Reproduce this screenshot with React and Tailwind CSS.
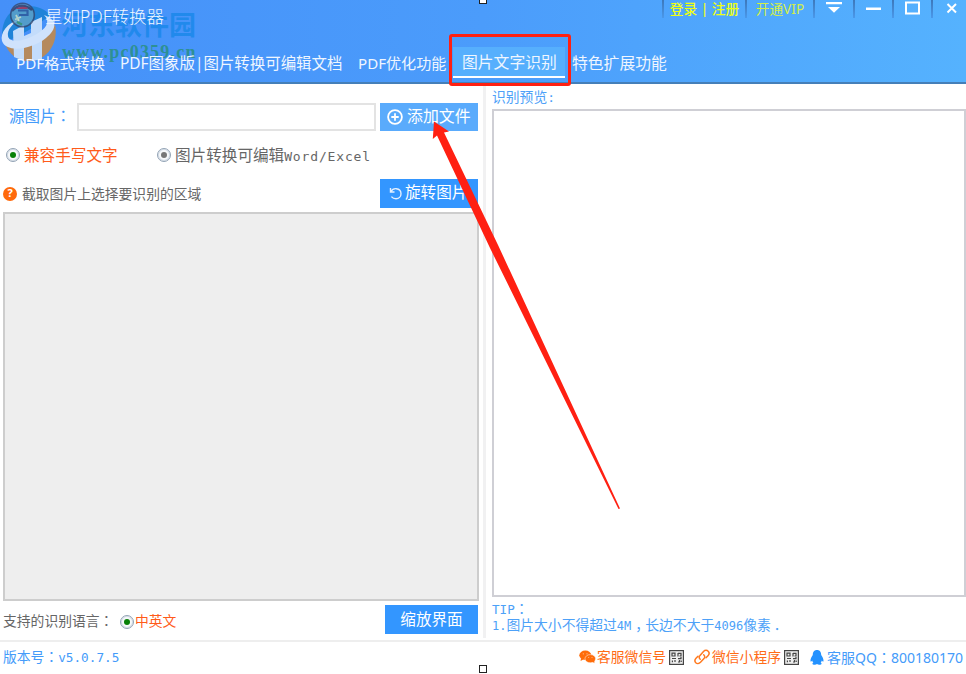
import clsx from 'clsx';

const tabs = [
  { label: 'PDF格式转换', box: 'w-[104px]', text: 'text-[15.2px]' },
  { label: 'PDF图象版|图片转换可编辑文档', box: 'w-[238px]', text: 'text-[15.45px]' },
  { label: 'PDF优化功能', box: 'w-[95px]', text: 'text-[15.1px]' },
  { label: '图片文字识别', box: 'w-[119px]', text: 'text-[15.8px]', active: true },
  { label: '特色扩展功能', box: 'w-[110px]', text: 'text-[15.8px]' },
];

const Mono = ({ className, children }) => (
  <span className={clsx("font-['DejaVu_Sans_Mono',monospace]", className)}>{children}</span>
);

// The TC face centres the full-width colon in its cell
const Colon = () => <span className="font-['Noto_Sans_CJK_TC',sans-serif] leading-none">：</span>;

const Radio = ({ checked }) => (
  <span className="flex h-[14px] w-[14px] shrink-0 items-center justify-center rounded-full border border-[#93a3b5] bg-[#f6f8fa] shadow-[inset_0_0_0_1px_#d5dde6]">
    <span className={clsx('h-[6px] w-[6px] rounded-full', checked ? 'bg-[#078007]' : 'bg-[#777]')} />
  </span>
);

const Separator = () => (
  <span className="h-[18px] w-[2px] shrink-0 bg-linear-to-b from-[#3d78ba] to-[#4a98ea]" />
);

const AppLogo = () => (
  <svg className="h-[27px] w-[27px] opacity-80" viewBox="0 0 27 27">
    <circle cx="13.5" cy="13" r="11.8" fill="#5fa3c9" stroke="#35486f" strokeWidth="1.6" />
    <path d="M3 9 Q12 -1 23 8" fill="none" stroke="#3a3f62" strokeWidth="2.4" />
    <path d="M7 6.5 Q12 3.5 18.5 5.5 V7 H7Z" fill="#b0304f" />
    <path d="M9 8.5 H18.5 V13 H10" fill="none" stroke="#35589b" strokeWidth="2.2" />
    <path d="M7 13 L10 19 M6 17.5 L12 15" stroke="#d8e6c8" strokeWidth="1.8" />
    <path d="M8 20 L13 22.5" stroke="#3f9a6a" strokeWidth="2" />
  </svg>
);

const QrIcon = () => (
  <svg className="h-[15px] w-[15px]" viewBox="0 0 15 15" fill="none" stroke="#444" strokeWidth="1.2">
    <rect x="0.6" y="0.6" width="13.8" height="13.8" fill="#eee" />
    <path d="M3 3.2H6V6H3ZM9 3V6.5M9 3.4H12V6H10.5M3 8.5H7M3.4 10.5V12.2M6 10V12M9 8.6H12V7M9 12H10.5V10M12.2 10.5V12" />
  </svg>
);

const WechatIcon = () => (
  <svg className="h-[14px] w-[17px]" viewBox="0 0 17 14">
    <ellipse cx="6.3" cy="5.2" rx="6" ry="4.7" fill="#ff6c0a" />
    <path d="M2 8 L1.6 11 L5 9Z" fill="#ff6c0a" />
    <ellipse cx="11.3" cy="8.7" rx="5.3" ry="4.1" fill="#ff6c0a" stroke="#fff" strokeWidth="0.5" />
    <path d="M13 11 L15.3 13.3 L15.3 10Z" fill="#ff6c0a" />
    <g fill="#ffc79e">
      <circle cx="4.3" cy="3.8" r="0.6" />
      <circle cx="8" cy="3.8" r="0.6" />
      <circle cx="9.7" cy="7.6" r="0.5" />
      <circle cx="13" cy="7.6" r="0.5" />
    </g>
  </svg>
);

const LinkIcon = () => (
  <svg className="h-[16px] w-[16px]" viewBox="0 0 16 16" fill="none" stroke="#ff7a20" strokeWidth="1.5" strokeLinecap="round">
    <path d="M6.2 10.2 C4.8 8.8 5 7.5 6 6.5 L9.5 2.5 C11 1 13 1 14.2 2.3 C15.5 3.6 15.3 5.3 14 6.7 L12 8.8" />
    <path d="M9.7 5.8 C11.1 7.2 11 8.5 10 9.5 L6.5 13.3 C5 14.8 3 14.9 1.8 13.7 C.6 12.4.7 10.7 2 9.3 L4 7.2" />
  </svg>
);

const QqIcon = () => (
  <svg className="h-[15px] w-[14px]" viewBox="0 0 14 15" fill="#2492ff">
    <path d="M7 0 C4 0 2.8 2.2 2.8 5 C1.5 7 .2 9 .5 11.5 C1.2 11.8 1.7 11 2.2 10.4 C2.5 11.7 3 12.1 3.4 12.5 C2 13 2 14.8 4 14.8 C5.5 14.8 6.5 14.4 7 14 C7.5 14.4 8.5 14.8 10 14.8 C12 14.8 12 13 10.6 12.5 C11 12.1 11.5 11.7 11.8 10.4 C12.3 11 12.8 11.8 13.5 11.5 C13.8 9 12.5 7 11.2 5 C11.2 2.2 10 0 7 0Z" />
  </svg>
);

const Watermark = () => (
  <div className="pointer-events-none absolute top-0 left-0 h-[68px] w-[200px]">
    <svg className="absolute top-0 left-0 h-[66px] w-[60px]" viewBox="0 0 60 66">
      <path d="M2 35 C2 17 13 6 28 6 C37 6 45 9 50 15 C40 24 20 36 5 42Z" fill="#1f83d8" />
      <path d="M5 43 C22 46 42 38 55 25 C59 43 47 61 29 61 C18 61 8 54 5 43Z" fill="#b58a5e" />
      <path d="M13 31L24 25V36L31 33V22L42 17V59L32 61V42L24 44V61L14 57Z" fill="#c3dcfb" />
      <path d="M20 19 C7 23 0 33 2 41 C6 53 31 50 46 38 C57 29 58 20 44 15 C51 22 46 29 35 35 C22 42 9 43 8 36 C7 30 12 24 20 19Z" fill="#cfe2fc" />
    </svg>
    <span className="absolute top-[8px] left-[61px] font-['Noto_Sans_CJK_SC',sans-serif] text-[27px] leading-[32px] font-bold whitespace-nowrap text-[#1b88ea]/85">河东软件园</span>
    <span className="absolute top-[42px] left-[62px] font-['Liberation_Serif',serif] text-[18px] leading-[20px] font-bold tracking-[1.2px] whitespace-nowrap text-[#2a9086]/90">www.pc0359.cn</span>
  </div>
);

const Header = () => (
  <header className="relative h-[84px] shrink-0 border-b-2 border-[#457fb8] bg-linear-to-r from-[#4590f9] via-[#4b9cfb] to-[#55b2fe] text-[#eff6ff]">
    <Watermark />
    <div className="relative flex h-[46px] items-start justify-between">
      <div className="flex pt-[2px] pl-[9px]">
        <AppLogo />
        <span className="ml-[9px] text-[17.5px] leading-[28px] font-light whitespace-nowrap">星如PDF转换器</span>
      </div>
      <div className="flex h-[18px] items-center text-[#eeff14]">
        <Separator />
        <span className="w-[81px] text-center text-[13.7px] font-medium whitespace-nowrap">登录 | 注册</span>
        <Separator />
        <span className="w-[66px] text-center text-[13.7px] whitespace-nowrap text-[#d3ee4a]">开通VIP</span>
        <Separator />
        <svg className="h-[18px] w-[38px]" viewBox="0 0 38 18" fill="#fff">
          <path d="M11 2H27V4.3H11ZM13 7H25L19 12.7Z" />
        </svg>
        <Separator />
        <svg className="h-[18px] w-[37px]" viewBox="0 0 37 18">
          <path d="M11 7.5H26V10H11Z" fill="#fff" />
        </svg>
        <Separator />
        <svg className="h-[18px] w-[37px]" viewBox="0 0 37 18" fill="none" stroke="#fff" strokeWidth="2">
          <rect x="12" y="2.5" width="13" height="11" />
        </svg>
        <Separator />
        <svg className="h-[18px] w-[33px]" viewBox="0 0 33 18" fill="none" stroke="#fff" strokeWidth="2">
          <path d="M14.5 4L23 12.5M23 4L14.5 12.5" />
        </svg>
      </div>
    </div>
    <nav className="relative flex h-[34px] pl-[16px]">
      {tabs.map((tab) => (
        <div key={tab.label} className={clsx('flex shrink-0', tab.box)}>
          {tab.active ? (
            <span className={clsx('mt-px h-[31px] w-[112px] border-b-2 border-white bg-[#56affd] pl-[9px] leading-[30px] whitespace-nowrap', tab.text)}>
              {tab.label}
            </span>
          ) : (
            <span className={clsx('leading-[34px] whitespace-nowrap', tab.text)}>{tab.label}</span>
          )}
        </div>
      ))}
    </nav>
  </header>
);

const SourcePanel = () => (
  <section className="flex w-[483px] shrink-0 flex-col pt-[19px] pl-[3px] text-[#666]">
    <div className="flex h-[28px] items-center">
      <span className="w-[74px] pl-[6px] text-[15.5px] whitespace-nowrap text-[#449bfa]">
        源图片
        <Colon />
      </span>
      <span className="h-[28px] w-[299px] border-2 border-[#e3e3e3] bg-white" />
      <button className="ml-[4px] flex h-[28px] w-[98px] items-center bg-[#5aabfc] pl-[7px] text-[15.9px] whitespace-nowrap text-white">
        <svg className="mr-[4px] h-[16px] w-[16px]" viewBox="0 0 16 16" fill="none" stroke="#fff" strokeWidth="1.8">
          <circle cx="8" cy="8" r="6.9" />
          <path d="M8 4.3V11.7M4.3 8H11.7" />
        </svg>
        添加文件
      </button>
    </div>
    <div className="mt-[11px] flex h-[26px] items-center text-[15.6px] whitespace-nowrap">
      <span className="flex w-[151px] items-center gap-[4px] pl-[3px] text-[#ff5b1a]">
        <Radio checked />
        <span className="pt-[2px]">兼容手写文字</span>
      </span>
      <span className="flex items-center gap-[4px] pl-[3px]">
        <Radio />
        <span className="pt-[2px]">
          图片转换可编辑
          <Mono className="text-[13px] tracking-[0.85px]">Word/Excel</Mono>
        </span>
      </span>
    </div>
    <div className="mt-[11px] flex h-[28px] items-center text-[13.8px] whitespace-nowrap">
      <span className="mt-px flex h-[14px] w-[14px] items-center justify-center rounded-full bg-[#ff690b] text-[11px] font-bold text-white">?</span>
      <span className="ml-[5px] w-[358px] pt-[2px]">截取图片上选择要识别的区域</span>
      <button className="flex h-[29px] w-[98px] items-center bg-[#3396ff] pl-[8px] text-[15.6px] text-white">
        <svg className="mr-[2px] h-[15px] w-[15px]" viewBox="0 0 15 15" fill="none" stroke="#e4f0ff" strokeWidth="1.4">
          <path d="M2.5 2V6H6.5M2.8 5.7C4 3.5 6 2.5 8.3 2.7C11 3 13 5 13 7.7C13 10.7 10.8 12.8 8 12.8C6 12.8 4.5 12 3.4 10.6" />
        </svg>
        旋转图片
      </button>
    </div>
    <div className="mt-[5px] h-[389px] w-[476px] border-2 border-[#cdcdcd] bg-[#eee]" />
    <div className="mt-[4px] flex h-[29px] items-center pt-[4px] text-[13.8px] whitespace-nowrap">
      <span className="w-[117px]">
        支持的识别语言
        <Colon />
      </span>
      <Radio checked />
      <span className="ml-[1px] w-[250px] text-[#ff5b1a]">中英文</span>
      <button className="-mt-[4px] h-[29px] w-[93px] shrink-0 bg-[#3396ff] text-[15.6px] text-white">缩放界面</button>
    </div>
  </section>
);

const PreviewPanel = () => (
  <section className="flex flex-1 flex-col border-l-3 border-[#f1f1f2] pl-[6px] text-[13.8px] whitespace-nowrap text-[#4da1f8]">
    <h2 className="h-[25px] leading-[26px]">
      识别预览<Mono className="text-[13px]">:</Mono>
    </h2>
    <div className="h-[488px] border-2 border-[#cfcfd5] bg-white" />
    <div className="pt-[4px] leading-[16px]">
      <p className="h-[16px]">
        <Mono className="text-[12.6px]">TIP</Mono>
        <Colon />
      </p>
      <p className="h-[16px]">
        <Mono className="text-[12px]">1.</Mono>图片大小不得超过<Mono className="text-[12px]">4M</Mono>
        <span className="inline-block w-[14px] pl-[4px]">，</span>长边不大于
        <Mono className="text-[12px]">4096</Mono>像素<span className="pl-[3px]">．</span>
      </p>
    </div>
  </section>
);

const Footer = () => (
  <footer className="flex h-[34px] items-center border-t-2 border-[#eee] pb-[2px] pl-[3px] text-[13.8px] whitespace-nowrap text-[#449bfa]">
    <span className="w-[576px]">
      版本号
      <Colon />
      <Mono className="text-[12.7px]">v5.0.7.5</Mono>
    </span>
    <span className="flex w-[115px] items-center text-[#ff6c16]">
      <WechatIcon />
      <span className="ml-[1px] w-[72px]">客服微信号</span>
      <QrIcon />
    </span>
    <span className="flex w-[116px] items-center text-[#ff6c16]">
      <LinkIcon />
      <span className="ml-[2px] w-[72px]">微信小程序</span>
      <QrIcon />
    </span>
    <QqIcon />
    <span className="ml-[3px] text-[14px]">
      客服QQ
      <Colon />
      800180170
    </span>
  </footer>
);

export default function App() {
  return (
    <div className="relative flex h-[674px] w-[966px] flex-col overflow-hidden bg-white font-['Noto_Sans','Noto_Sans_CJK_SC',sans-serif]">
      <Header />
      <main className="flex h-[556px] shrink-0 pb-[2px]">
        <SourcePanel />
        <PreviewPanel />
      </main>
      <Footer />
      <div className="absolute top-[34px] left-[449px] h-[52px] w-[122px] rounded-[3px] border-3 border-[#ff2012]" />
      <svg className="pointer-events-none absolute top-[110px] left-[420px] h-[410px] w-[210px]" viewBox="0 0 210 410">
        <path d="M14 11.5L29 21.5L24 22.5L78 135L200 398.5L198.5 399L70 138L17 25.5L12.8 29Z" fill="#ff2012" />
      </svg>
      <span className="absolute -top-[4px] left-[479px] h-[8px] w-[8px] border border-[#222] bg-white" />
      <span className="absolute top-[665px] left-[479px] h-[8px] w-[8px] border border-[#222] bg-white" />
    </div>
  );
}
